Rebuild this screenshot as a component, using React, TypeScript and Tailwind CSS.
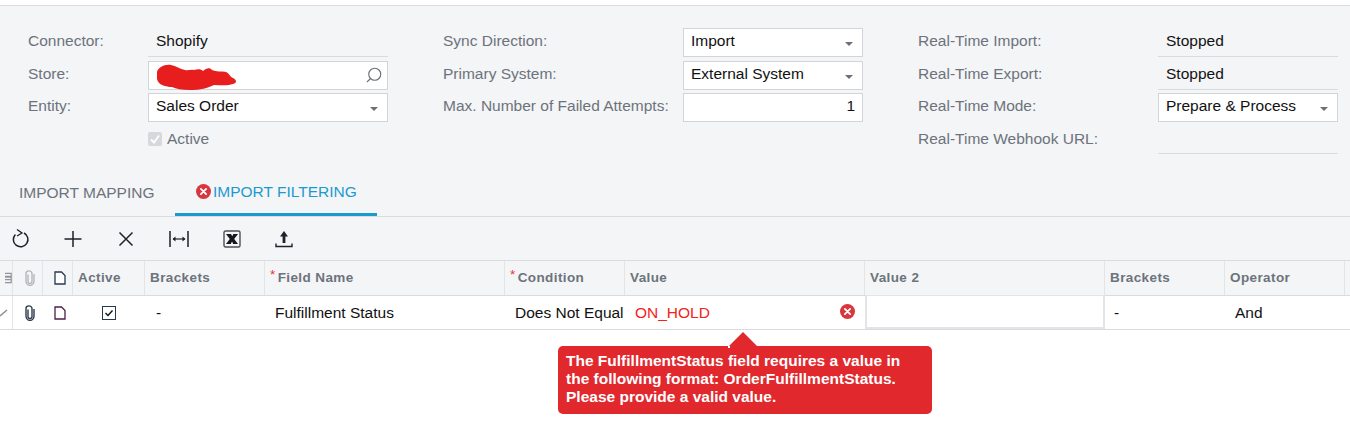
import type { ReactNode } from 'react'
import { Search } from 'lucide-react'

const font = { fontFamily: '"Liberation Sans", Arial, sans-serif' }

function Caret() {
  return <span className="absolute right-[9px] top-[13px] h-0 w-0 border-x-[4px] border-t-[4px] border-x-transparent border-t-[#6b6f76]" />
}

function Label({ children }: { children: ReactNode }) {
  return <div className="text-[#6c737b] leading-[26.6px]">{children}</div>
}

function Field({ children, right }: { children?: ReactNode; right?: boolean }) {
  return (
    <div className={`relative h-[29px] border border-[#d2d4d7] bg-white px-[7px] leading-[24px] text-[#111] ${right ? 'text-right pr-[7px]' : ''}`}>
      {children}
    </div>
  )
}

function Select({ value }: { value: string }) {
  return (
    <Field>
      {value}
      <Caret />
    </Field>
  )
}

function ReadOnly({ children }: { children?: ReactNode }) {
  return <div className="h-[29px] border-b border-[#d9dbde] pl-2 leading-[26.6px] text-[#111]">{children}</div>
}

function Scribble() {
  return (
    <svg className="absolute left-[7px] top-[1px]" width="84" height="28" viewBox="0 0 84 28">
      <path
        fill="#e81e1e"
        d="M1 9 C2 5 8 1 15 2 C20 3 24 6 29 7 C32 8 35 6 38 7 C42 6 45 6 47 8 C50 5 54 4 56 7 C60 9 66 8 70 9 C73 10 74 14 77 15 C81 17 81 20 77 21 C72 23 64 22 58 22 C52 25 44 27 34 27 C26 27 20 26 16 24 C10 24 2 22 1 16 Z"
      />
    </svg>
  )
}

function ErrorDot({ size }: { size: number }) {
  return (
    <svg width={size} height={size} viewBox="0 0 16 16" className="shrink-0">
      <circle cx="8" cy="8" r="8" fill="#d9363e" />
      <path d="M5.2 5.2 L10.8 10.8 M10.8 5.2 L5.2 10.8" stroke="#fff" strokeWidth="1.9" strokeLinecap="round" />
    </svg>
  )
}

function Toolbar() {
  const stroke = { fill: 'none', stroke: '#1d2229', strokeWidth: 1.5 }
  return (
    <div className="flex h-[44px] items-center border-b border-[#d9dbde]">
      <svg className="ml-[12px]" width="18" height="20" viewBox="0 0 18 20" {...stroke}>
        <path d="M3.4 5.4 A7.3 7.3 0 1 0 12 4" />
        <path d="M5 0.5 L10 4 L5 7" strokeWidth="1.3" />
      </svg>
      <svg className="ml-[34px]" width="18" height="18" viewBox="0 0 18 18" {...stroke}>
        <path d="M0.5 9 H17.5 M9 1 V17" />
      </svg>
      <svg className="ml-[36px]" width="16" height="16" viewBox="0 0 16 16" {...stroke}>
        <path d="M1.5 1.5 L14.5 14.5 M14.5 1.5 L1.5 14.5" />
      </svg>
      <svg className="ml-[35px]" width="20" height="18" viewBox="0 0 20 18" {...stroke}>
        <path d="M1 1 V17 M19 1 V17" />
        <path d="M4 9 H16" strokeWidth="1.2" />
        <path d="M6.5 6.5 L3.5 9 L6.5 11.5 Z M13.5 6.5 L16.5 9 L13.5 11.5 Z" fill="#1d2229" stroke="none" />
      </svg>
      <svg className="ml-[34px]" width="18" height="18" viewBox="0 0 18 18">
        <rect x="1" y="1" width="16" height="16" rx="1.5" fill="none" stroke="#4a5058" strokeWidth="1.4" />
        <path d="M3 4 H8 L9.2 6.2 L10.4 4 H15 L11.2 9 L15 14 H10.2 L9 11.6 L7.8 14 H3 L6.8 9 Z" fill="#14181d" />
      </svg>
      <svg className="ml-[34px]" width="18" height="18" viewBox="0 0 18 18">
        <path d="M1 13.5 V16.5 H17 V13.5" fill="none" stroke="#1d2229" strokeWidth="1.4" />
        <path d="M9 1 L13 6.5 H10.4 V13 H7.6 V6.5 H5 Z" fill="#1d2229" />
      </svg>
    </div>
  )
}

function Clip({ color }: { color: string }) {
  return (
    <svg width="12" height="16" viewBox="0 0 12 16" fill="none" stroke={color} strokeWidth="1.4">
      <path d="M4 4.5 V11.5 A2 2 0 0 0 8 11.5 V3.5 A3 2.6 0 0 0 2 3.5 V11 A4 4.4 0 0 0 10 11 V4" />
    </svg>
  )
}

function Doc({ color }: { color: string }) {
  return (
    <svg width="12" height="14" viewBox="0 0 12 14" fill="#fff" stroke={color} strokeWidth="1.3">
      <path d="M1 1 H7.5 L11 4.5 V13 H1 Z" />
    </svg>
  )
}

function HeadCell({ children, required, className = '' }: { children?: ReactNode; required?: boolean; className?: string }) {
  return (
    <div className={`relative flex items-center border-r border-[#e3e4e7] pl-[5px] text-[13.5px] font-bold tracking-[0.4px] text-[#6c737b] ${className}`}>
      {required && <span className="mr-[2px] -mt-[5px] text-[#e8352e] font-normal">*</span>}
      {children}
    </div>
  )
}

const gridCols = 'grid grid-cols-[13px_30px_30px_72px_120px_240px_120px_240px_240px_120px_120px]'

export default function App() {
  return (
    <div className="h-[436px] w-[1350px] overflow-hidden bg-white text-[15.5px]" style={font}>
      <div className="h-[5px] bg-white" />
      <div className="border-t border-[#d9dbde] bg-[#f4f5f7]">
        <div className="flex h-[164px] pt-[22px]">
          <div className="ml-[28px] w-[360px]">
            <div className="grid grid-cols-[120px_240px] grid-rows-[29px_29px_29px_29px] gap-y-[3.5px]">
              <Label>Connector:</Label>
              <ReadOnly>Shopify</ReadOnly>
              <Label>Store:</Label>
              <Field>
                <Scribble />
                <Search className="absolute right-[4px] top-[4px] text-[#6b6f76] -scale-x-100" size={18} strokeWidth={1.5} />
              </Field>
              <Label>Entity:</Label>
              <Select value="Sales Order" />
              <div />
              <div className="-mt-[2px] flex items-center gap-[5px] text-[#6c737b]">
                <span className="flex h-[14px] w-[14px] items-center justify-center rounded-[2px] bg-[#d6d8db]">
                  <svg width="10" height="10" viewBox="0 0 10 10" fill="none" stroke="#fff" strokeWidth="1.8">
                    <path d="M1 5.5 L4 8.5 L9 1.5" />
                  </svg>
                </span>
                Active
              </div>
            </div>
          </div>
          <div className="ml-[55px] w-[420px]">
            <div className="grid grid-cols-[240px_180px] grid-rows-[29px_29px_29px] gap-y-[3.5px]">
              <Label>Sync Direction:</Label>
              <Select value="Import" />
              <Label>Primary System:</Label>
              <Select value="External System" />
              <Label>Max. Number of Failed Attempts:</Label>
              <Field right>1</Field>
            </div>
          </div>
          <div className="ml-[55px] w-[420px]">
            <div className="grid grid-cols-[240px_180px] grid-rows-[29px_29px_29px_29px] gap-y-[3.5px]">
              <Label>Real-Time Import:</Label>
              <ReadOnly>Stopped</ReadOnly>
              <Label>Real-Time Export:</Label>
              <ReadOnly>Stopped</ReadOnly>
              <Label>Real-Time Mode:</Label>
              <Select value="Prepare & Process" />
              <Label>Real-Time Webhook URL:</Label>
              <div className="-mt-px">
                <ReadOnly />
              </div>
            </div>
          </div>
        </div>

        <div className="flex h-[47px] border-b border-[#d9dbde]">
          <div className="flex w-[175px] items-center pl-[19px] text-[#6c737b]">IMPORT MAPPING</div>
          <div className="flex w-[202px] items-center gap-[2px] border-b-[3px] border-[#1a9bd0] pl-[21px] text-[#1a9bd0]">
            <ErrorDot size={15} />
            IMPORT FILTERING
          </div>
        </div>

        <Toolbar />

        <div className={`${gridCols} h-[35px] border-b border-[#d9dbde]`}>
          <HeadCell className="pl-0">
            <svg width="9" height="14" viewBox="0 0 9 14" fill="none" stroke="#8f959b" strokeWidth="1.5">
              <path d="M0 1 H8 V5 H0 M0 6 H8 V13 H0 M0 9 H8" />
            </svg>
          </HeadCell>
          <HeadCell className="justify-center pl-0">
            <Clip color="#b4b7bb" />
          </HeadCell>
          <HeadCell className="justify-center pl-0">
            <Doc color="#27384f" />
          </HeadCell>
          <HeadCell>Active</HeadCell>
          <HeadCell>Brackets</HeadCell>
          <HeadCell required>Field Name</HeadCell>
          <HeadCell required>Condition</HeadCell>
          <HeadCell>Value</HeadCell>
          <HeadCell>Value 2</HeadCell>
          <HeadCell>Brackets</HeadCell>
          <HeadCell>Operator</HeadCell>
        </div>
      </div>

      <div className={`${gridCols} relative h-[34px] border-b border-[#d9dbde] bg-white text-[#111]`}>
        <div className="flex items-center border-r border-[#e3e4e7]">
          <svg width="9" height="9" viewBox="0 0 9 9" fill="none" stroke="#8a8e94" strokeWidth="1.5">
            <path d="M0 8 L7 2" />
          </svg>
        </div>
        <div className="flex items-center justify-center pl-[4px]">
          <Clip color="#2c3a4d" />
        </div>
        <div className="flex items-center justify-center pl-[4px]">
          <Doc color="#4b1f4a" />
        </div>
        <div className="flex items-center justify-center">
          <span className="flex h-[14px] w-[14px] items-center justify-center border border-[#27384f]">
            <svg width="10" height="10" viewBox="0 0 10 10" fill="none" stroke="#111" strokeWidth="1.4">
              <path d="M1.5 5 L4 7.5 L8.5 2.5" />
            </svg>
          </span>
        </div>
        <div className="flex items-center pl-[11px]">-</div>
        <div className="flex items-center pl-[10px]">Fulfillment Status</div>
        <div className="flex items-center whitespace-nowrap pl-[10px]">Does Not Equal</div>
        <div className="relative flex items-center pl-[10px] text-[#f5221b]">
          ON_HOLD
          <span className="absolute right-[10px] top-[8px] flex">
            <ErrorDot size={15} />
          </span>
        </div>
        <div className="-mt-px border-2 border-t border-[#e3e4e7] bg-white" />
        <div className="flex items-center pl-[9px]">-</div>
        <div className="flex items-center pl-[10px]">And</div>
      </div>

      <div className="absolute left-[558px] top-[346px] h-[68px] w-[374px] rounded-[5px] bg-[#e1282d] px-[8px] pt-[6px] text-[15.5px] font-bold leading-[18px] text-white whitespace-nowrap">
        <span className="absolute left-[171px] -top-[14px] h-0 w-0 border-x-[14px] border-b-[14px] border-x-transparent border-b-[#e1282d]" />
        <span className="absolute left-[170px] top-0 h-[2px] w-[2px] bg-white" />
        The FulfillmentStatus field requires a value in
        <br />
        the following format: OrderFulfillmentStatus.
        <br />
        Please provide a valid value.
      </div>
    </div>
  )
}
